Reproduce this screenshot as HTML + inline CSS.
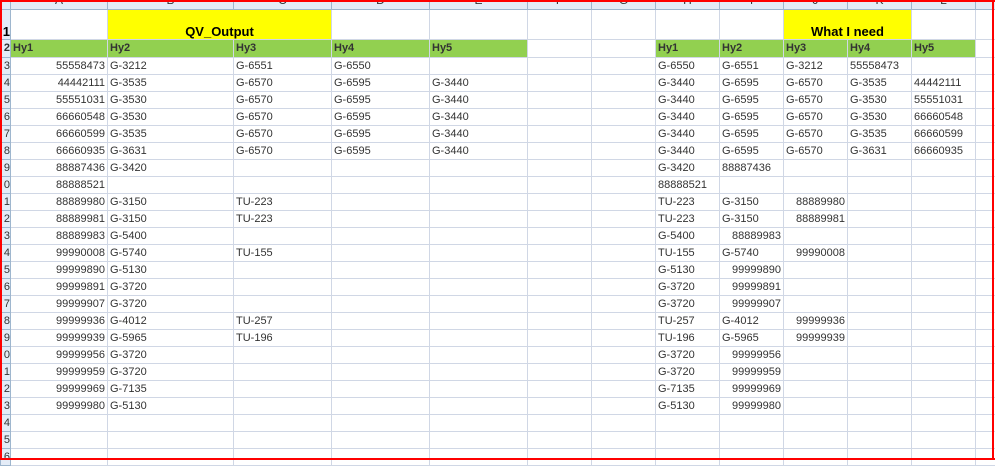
<!DOCTYPE html>
<html><head><meta charset="utf-8"><style>
*{margin:0;padding:0;box-sizing:border-box}
body{width:995px;height:460px;overflow:hidden;background:#fff;font-family:"Liberation Sans","DejaVu Sans",sans-serif;position:relative}
table{position:absolute;left:0;top:-8px;border-collapse:collapse;table-layout:fixed;width:1015px}
td{border:1px solid #d0d7e5;height:17px;font-size:11px;color:#333;white-space:nowrap;overflow:hidden;padding:0 2px;line-height:15px}
td.h{background:#e4ecf7;border-color:#9eb6ce;text-align:center;color:#333;font-size:12px;height:17px;vertical-align:top}
td.rh{background:#e4ecf7;border-color:#9eb6ce;font-size:11px;color:#333;text-align:right;padding:0;text-overflow:clip}
td.r{text-align:right}
tr.t td{height:30px;vertical-align:bottom;font-size:13px;font-weight:bold;color:#000}
td.y{background:#ffff00;text-align:center}
tr.g td{background:#92d050;font-weight:bold;height:18px;color:#333}
tr.g td.rh{background:#e4ecf7}
.frame{position:absolute;left:0;top:0;width:995px;height:460px;border:2px solid #ff0000;border-right:none;pointer-events:none}
.rb{position:absolute;left:992px;top:0;width:2px;height:460px;background:#ff0000}
</style></head><body>
<table>
<colgroup><col style="width:10px"><col style="width:97px"><col style="width:126px"><col style="width:98px"><col style="width:98px"><col style="width:98px"><col style="width:64px"><col style="width:64px"><col style="width:64px"><col style="width:64px"><col style="width:64px"><col style="width:64px"><col style="width:64px"><col style="width:40px"></colgroup>
<tr><td class="h"></td><td class="h">A</td><td class="h">B</td><td class="h">C</td><td class="h">D</td><td class="h">E</td><td class="h">F</td><td class="h">G</td><td class="h">H</td><td class="h">I</td><td class="h">J</td><td class="h">K</td><td class="h">L</td><td class="h"></td></tr>
<tr class="t"><td class="rh">1</td><td></td><td class="y" colspan="2">QV_Output</td><td></td><td></td><td></td><td></td><td></td><td></td><td class="y" colspan="2">What I need</td><td></td><td></td></tr>
<tr class="g"><td class="rh">2</td><td>Hy1</td><td>Hy2</td><td>Hy3</td><td>Hy4</td><td>Hy5</td><td style="background:#fff"></td><td style="background:#fff"></td><td>Hy1</td><td>Hy2</td><td>Hy3</td><td>Hy4</td><td>Hy5</td><td style="background:#fff"></td></tr>
<tr><td class="rh">3</td><td class="r">55558473</td><td>G-3212</td><td>G-6551</td><td>G-6550</td><td></td><td></td><td></td><td>G-6550</td><td>G-6551</td><td>G-3212</td><td>55558473</td><td></td><td></td></tr>
<tr><td class="rh">4</td><td class="r">44442111</td><td>G-3535</td><td>G-6570</td><td>G-6595</td><td>G-3440</td><td></td><td></td><td>G-3440</td><td>G-6595</td><td>G-6570</td><td>G-3535</td><td>44442111</td><td></td></tr>
<tr><td class="rh">5</td><td class="r">55551031</td><td>G-3530</td><td>G-6570</td><td>G-6595</td><td>G-3440</td><td></td><td></td><td>G-3440</td><td>G-6595</td><td>G-6570</td><td>G-3530</td><td>55551031</td><td></td></tr>
<tr><td class="rh">6</td><td class="r">66660548</td><td>G-3530</td><td>G-6570</td><td>G-6595</td><td>G-3440</td><td></td><td></td><td>G-3440</td><td>G-6595</td><td>G-6570</td><td>G-3530</td><td>66660548</td><td></td></tr>
<tr><td class="rh">7</td><td class="r">66660599</td><td>G-3535</td><td>G-6570</td><td>G-6595</td><td>G-3440</td><td></td><td></td><td>G-3440</td><td>G-6595</td><td>G-6570</td><td>G-3535</td><td>66660599</td><td></td></tr>
<tr><td class="rh">8</td><td class="r">66660935</td><td>G-3631</td><td>G-6570</td><td>G-6595</td><td>G-3440</td><td></td><td></td><td>G-3440</td><td>G-6595</td><td>G-6570</td><td>G-3631</td><td>66660935</td><td></td></tr>
<tr><td class="rh">9</td><td class="r">88887436</td><td>G-3420</td><td></td><td></td><td></td><td></td><td></td><td>G-3420</td><td>88887436</td><td></td><td></td><td></td><td></td></tr>
<tr><td class="rh">0</td><td class="r">88888521</td><td></td><td></td><td></td><td></td><td></td><td></td><td>88888521</td><td></td><td></td><td></td><td></td><td></td></tr>
<tr><td class="rh">1</td><td class="r">88889980</td><td>G-3150</td><td>TU-223</td><td></td><td></td><td></td><td></td><td>TU-223</td><td>G-3150</td><td class="r">88889980</td><td></td><td></td><td></td></tr>
<tr><td class="rh">2</td><td class="r">88889981</td><td>G-3150</td><td>TU-223</td><td></td><td></td><td></td><td></td><td>TU-223</td><td>G-3150</td><td class="r">88889981</td><td></td><td></td><td></td></tr>
<tr><td class="rh">3</td><td class="r">88889983</td><td>G-5400</td><td></td><td></td><td></td><td></td><td></td><td>G-5400</td><td class="r">88889983</td><td></td><td></td><td></td><td></td></tr>
<tr><td class="rh">4</td><td class="r">99990008</td><td>G-5740</td><td>TU-155</td><td></td><td></td><td></td><td></td><td>TU-155</td><td>G-5740</td><td class="r">99990008</td><td></td><td></td><td></td></tr>
<tr><td class="rh">5</td><td class="r">99999890</td><td>G-5130</td><td></td><td></td><td></td><td></td><td></td><td>G-5130</td><td class="r">99999890</td><td></td><td></td><td></td><td></td></tr>
<tr><td class="rh">6</td><td class="r">99999891</td><td>G-3720</td><td></td><td></td><td></td><td></td><td></td><td>G-3720</td><td class="r">99999891</td><td></td><td></td><td></td><td></td></tr>
<tr><td class="rh">7</td><td class="r">99999907</td><td>G-3720</td><td></td><td></td><td></td><td></td><td></td><td>G-3720</td><td class="r">99999907</td><td></td><td></td><td></td><td></td></tr>
<tr><td class="rh">8</td><td class="r">99999936</td><td>G-4012</td><td>TU-257</td><td></td><td></td><td></td><td></td><td>TU-257</td><td>G-4012</td><td class="r">99999936</td><td></td><td></td><td></td></tr>
<tr><td class="rh">9</td><td class="r">99999939</td><td>G-5965</td><td>TU-196</td><td></td><td></td><td></td><td></td><td>TU-196</td><td>G-5965</td><td class="r">99999939</td><td></td><td></td><td></td></tr>
<tr><td class="rh">0</td><td class="r">99999956</td><td>G-3720</td><td></td><td></td><td></td><td></td><td></td><td>G-3720</td><td class="r">99999956</td><td></td><td></td><td></td><td></td></tr>
<tr><td class="rh">1</td><td class="r">99999959</td><td>G-3720</td><td></td><td></td><td></td><td></td><td></td><td>G-3720</td><td class="r">99999959</td><td></td><td></td><td></td><td></td></tr>
<tr><td class="rh">2</td><td class="r">99999969</td><td>G-7135</td><td></td><td></td><td></td><td></td><td></td><td>G-7135</td><td class="r">99999969</td><td></td><td></td><td></td><td></td></tr>
<tr><td class="rh">3</td><td class="r">99999980</td><td>G-5130</td><td></td><td></td><td></td><td></td><td></td><td>G-5130</td><td class="r">99999980</td><td></td><td></td><td></td><td></td></tr>
<tr><td class="rh">4</td><td></td><td></td><td></td><td></td><td></td><td></td><td></td><td></td><td></td><td></td><td></td><td></td><td></td></tr>
<tr><td class="rh">5</td><td></td><td></td><td></td><td></td><td></td><td></td><td></td><td></td><td></td><td></td><td></td><td></td><td></td></tr>
<tr><td class="rh">6</td><td></td><td></td><td></td><td></td><td></td><td></td><td></td><td></td><td></td><td></td><td></td><td></td><td></td></tr>
</table>
<div class="frame"></div><div class="rb"></div>
</body></html>
